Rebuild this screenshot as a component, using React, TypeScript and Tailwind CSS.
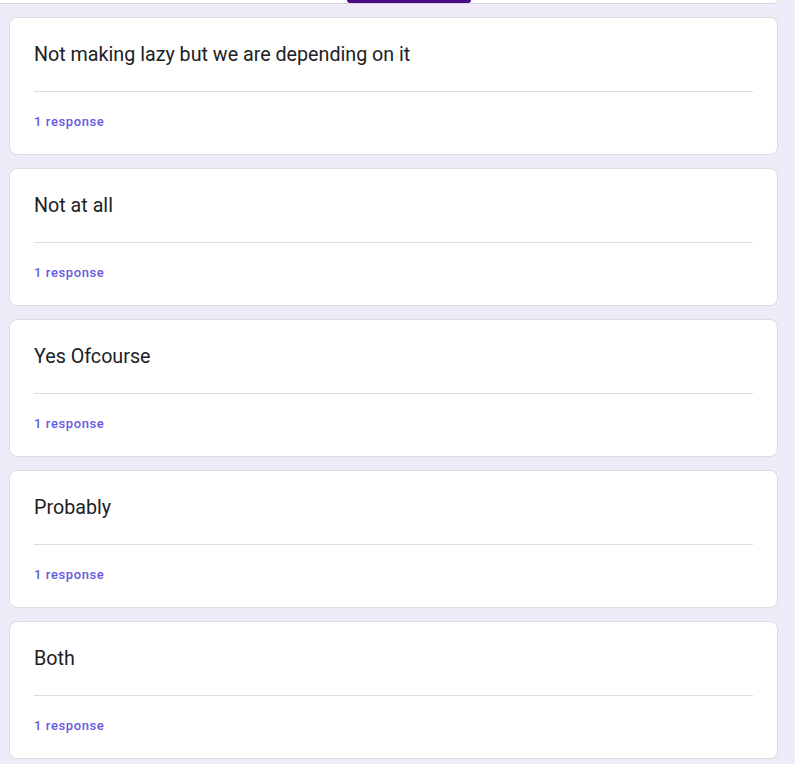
const ANSWERS = [
  'Not making lazy but we are depending on it',
  'Not at all',
  'Yes Ofcourse',
  'Probably',
  'Both',
];

function AnswerCard({ text }: { text: string }) {
  return (
    <div className="w-[769px] rounded-lg border border-[#dadce0] bg-white px-[24px] pt-[25px] pb-[24px]">
      <p className="text-[19.7px] leading-[24px] text-[#202124] font-['Roboto',sans-serif] font-normal">{text}</p>
      <div className="mt-[24px] h-px bg-[#dadce0]" />
      <p className="mt-[22px] text-[13px] leading-[16px] font-medium tracking-[0.6px] text-[#6559e3] font-['Roboto',sans-serif]">
        1 response
      </p>
    </div>
  );
}

export default function App() {
  return (
    <div className="min-h-[764px] w-[795px] bg-[#f0ebf8] pb-4">
      {/* tail of the header card */}
      <div className="flex h-[4px] w-[777px] rounded-br-lg border-b border-[#d6d6da] bg-white">
        <div className="ml-[347px] h-[3px] w-[124px] rounded-b-sm bg-[#4a0a8a]" />
      </div>

      <div className="mt-[13px] flex flex-col gap-[13px] pl-[9px]">
        {ANSWERS.map((a) => (
          <AnswerCard key={a} text={a} />
        ))}
      </div>
    </div>
  );
}
